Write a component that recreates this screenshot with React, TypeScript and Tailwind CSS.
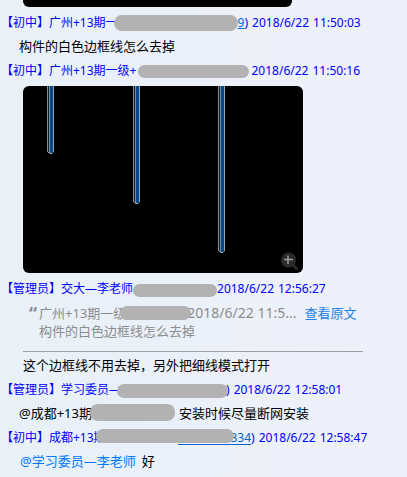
import React from 'react';

function Mask({ className }: { className: string }) {
    return <span aria-hidden="true" className={`relative shrink-0 bg-[#b2b2b2] ${className}`} />;
}

function Header({ children }: { children: React.ReactNode }) {
    return (
        <div className="flex h-6 items-center whitespace-pre pl-px text-xs text-[#0000ff]">
            {children}
        </div>
    );
}

function Stamp({ time }: { time: string }) {
    return (
        <time className="flex gap-1">
            <span>2018/6/22</span>
            <span>{time}</span>
        </time>
    );
}

function Magnifier() {
    return (
        <svg viewBox="0 0 18 19" className="h-[19px] w-[18px]" fill="none">
            <path d="M11 12l4.500 4.500" stroke="#2b2b2b" strokeWidth="3" strokeLinecap="round" />
            <circle cx="7.500" cy="8" r="7.500" fill="#2b2b2b" />
            <path d="M7 3.500v8.500M3 7.500h9" stroke="#a0a0a0" strokeWidth="1.500" />
        </svg>
    );
}

const pipes = [
    { x: 24, end: 67 },
    { x: 110, end: 117 },
    { x: 195, end: 166 },
];

function Drawing() {
    return (
        <svg viewBox="0 0 280 187" className="block w-full" role="img" aria-label="构件">
            {pipes.map(({ x, end }) => (
                <g key={x}>
                    <path d={`M${x} 0h7v${end - 2}l-2 2h-3l-2 -2z`} fill="#0a2038" />
                    <path d={`M${x + 0.5} 0v${end - 1}`} stroke="#8c8c8c" />
                    <path d={`M${x + 2.5} 0v${end}`} stroke="#7d8a96" />
                    <path d={`M${x + 4.5} 0v${end}`} stroke="#08488c" strokeWidth="3" />
                    <path d={`M${x + 6.5} 0v${end - 1}`} stroke="#8ba3b8" />
                    <path d={`M${x + 1} ${end - 1}l2 1.500h2l1 -1`} stroke="#a8b0b8" fill="none" />
                </g>
            ))}
        </svg>
    );
}

export default function App() {
    return (
        <main className="min-h-screen overflow-hidden bg-linear-to-r from-[#e8f0f8] to-[#eef1fb] font-['Noto_Sans','Noto_Sans_CJK_SC',sans-serif] text-[13px] text-black">
            <div className="mb-1 ml-[23px] h-[7px] w-[269px] rounded-b-md bg-black" />

            <Header>
                <span>【初中】广州+13期一</span>
                <Mask className="-ml-1 h-4 w-[124px] rounded-full" />
                <span className="mr-1"><a href="#" className="text-[#0066cc] underline">9</a>)</span>
                <Stamp time="11:50:03" />
            </Header>
            <p className="flex h-6 items-center pl-[19px]">构件的白色边框线怎么去掉</p>

            <Header>
                <span>【初中】广州+13期一级+</span>
                <Mask className="mr-0.5 ml-0.5 h-[13px] w-[111px] rounded-full" />
                <Stamp time="11:50:16" />
            </Header>
            <div className="relative mt-[3px] mb-1 ml-[23px] w-[280px] overflow-hidden rounded-md bg-black">
                <Drawing />
                <button type="button" aria-label="放大" className="absolute right-1 bottom-0.5">
                    <Magnifier />
                </button>
            </div>

            <Header>
                <span>【管理员】交大—李老师</span>
                <Mask className="mt-0.5 h-[13px] w-[84px] rounded-full" />
                <Stamp time="12:56:27" />
            </Header>
            <div className="mr-11 ml-[23px] border-b border-[#a0a0a0] pt-0.5 pb-3 text-[#8c8c8c]">
                <blockquote className="whitespace-pre">
                    <div className="flex items-center leading-5">
                        <span className="w-4 pl-1.5 text-lg leading-5 font-bold">“</span>
                        <span>广州+13期一级</span>
                        <Mask className="-ml-1.5 h-[14px] w-[71px] rounded-full" />
                        <span className="-ml-1 text-sm leading-5">2018/6/22 11:5...</span>
                        <a href="#" className="ml-2 text-[#1e82e6]">查看原文</a>
                    </div>
                    <p className="pl-4 leading-4">构件的白色边框线怎么去掉</p>
                </blockquote>
            </div>
            <p className="mt-0.5 flex h-6 items-center pl-[23px]">这个边框线不用去掉，另外把细线模式打开</p>

            <Header>
                <span>【管理员】学习委员—</span>
                <Mask className="-ml-1 mt-0.5 h-[14px] w-[111px] rounded-full" />
                <span className="-ml-0.5 mr-1">)</span>
                <Stamp time="12:58:01" />
            </Header>
            <p className="flex h-6 items-center whitespace-pre pl-[19px]">
                <span>@成都+13期</span>
                <Mask className="-ml-0.5 -mt-1 mr-1 h-[17px] w-[85px] rounded-lg" />
                <span>安装时候尽量断网安装</span>
            </p>

            <Header>
                <span>【初中】成都+13期一级+</span>
                <Mask className="-mt-1 -ml-10 h-[14px] w-[138px] rounded-full" />
                <span className="-ml-14 mr-1"><a href="#" className="inline-block border-b border-[#0066cc] pl-13 leading-3 text-[#0066cc]">334</a>)</span>
                <Stamp time="12:58:47" />
            </Header>
            <p className="flex h-6 items-center gap-1.5 pl-5">
                <a href="#" className="text-[#0078ff]">@学习委员—李老师</a>
                <span>好</span>
            </p>
        </main>
    );
}
